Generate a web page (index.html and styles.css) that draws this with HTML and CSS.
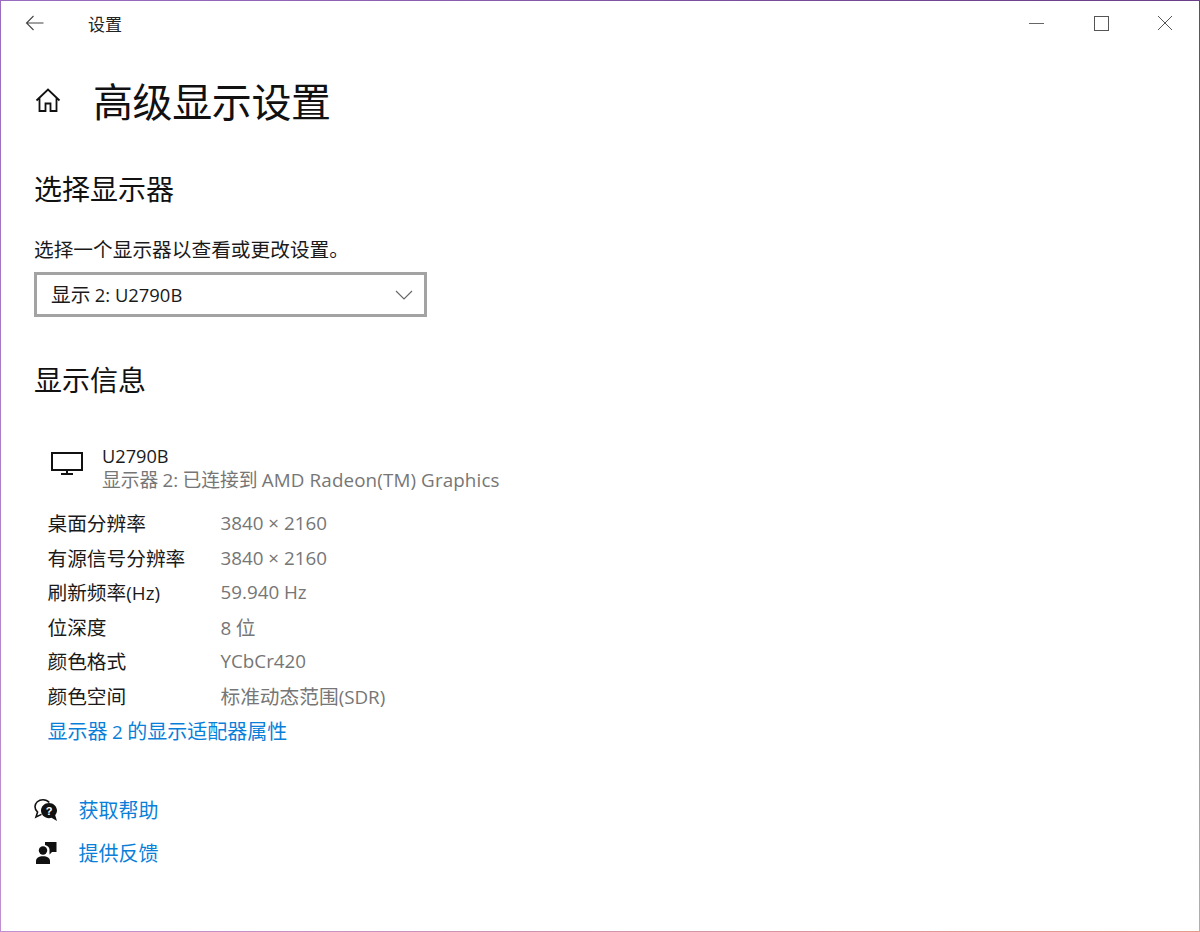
FILE: index.html
```html
<!DOCTYPE html>
<html lang="zh-CN">
<head>
<meta charset="utf-8">
<title>设置</title>
<link rel="stylesheet" href="styles.css">
</head>
<body>
<div class="window">
  <header class="titlebar">
    <svg class="back" width="20" height="16" viewBox="0 0 20 16"><path d="M8.500 1 1.500 8l7 7M1.500 8h17" fill="none" stroke="#444" stroke-width="1.100"/></svg>
    <span class="title">设置</span>
    <div class="controls">
      <svg width="16" height="16" viewBox="0 0 16 16"><path d="M0 8.500h15" stroke="#666" stroke-width="1"/></svg>
      <svg width="16" height="16" viewBox="0 0 16 16"><rect x="1.500" y="1.500" width="14" height="14" fill="none" stroke="#555" stroke-width="1"/></svg>
      <svg width="16" height="16" viewBox="0 0 16 16"><path d="M1 1l14 14M15 1 1 15" stroke="#555" stroke-width="1" fill="none"/></svg>
    </div>
  </header>
  <main class="content">
    <div class="page-head">
      <svg class="home" width="26" height="26" viewBox="0 0 26 26"><path d="M1.500 13.500 13 2.500l11.500 11M4.500 11v13h6v-7.500h5V24h6V11" fill="none" stroke="#111" stroke-width="1.800"/></svg>
      <h1>高级显示设置</h1>
    </div>
    <h2 class="h-select">选择显示器</h2>
    <p class="hint">选择一个显示器以查看或更改设置。</p>
    <div class="select">
      <span class="select-text">显示 <span class="lat">2: U2790B</span></span>
      <svg width="18" height="10" viewBox="0 0 18 10"><path d="M1 1l8 8 8-8" fill="none" stroke="#666" stroke-width="1.100"/></svg>
    </div>
    <h2 class="h-info">显示信息</h2>
    <div class="monitor">
      <svg class="monitor-icon" width="32" height="23" viewBox="0 0 32 23"><path d="M1 1h30v17H1zM16 18v4M10 22h12" fill="none" stroke="#111" stroke-width="2"/></svg>
      <div class="monitor-text">
        <div class="m-name lat">U2790B</div>
        <div class="m-desc">显示器 <span class="lat">2:</span> 已连接到 <span class="lat wide">AMD Radeon(TM) Graphics</span></div>
      </div>
    </div>
    <dl class="info">
      <dt>桌面分辨率</dt><dd class="lat">3840 × 2160</dd>
      <dt>有源信号分辨率</dt><dd class="lat">3840 × 2160</dd>
      <dt>刷新频率<span class="lat">(Hz)</span></dt><dd class="lat">59.940 Hz</dd>
      <dt>位深度</dt><dd><span class="lat">8</span> 位</dd>
      <dt>颜色格式</dt><dd class="lat">YCbCr420</dd>
      <dt>颜色空间</dt><dd>标准动态范围<span class="lat">(SDR)</span></dd>
    </dl>
    <a class="link adapter">显示器 <span class="lat">2</span> 的显示适配器属性</a>
    <div class="help">
      <div class="help-row">
        <svg width="24" height="24" viewBox="0 0 24 24"><path d="M9 1.700C4.500 1.700 1 4.800 1 8.800c0 2.100 1 4 2.600 5.300L2 19l5.500-2.600" fill="none" stroke="#111" stroke-width="1.600"/><path d="M9 1.700c2.500 0 4.800 1 6.300 2.800" fill="none" stroke="#111" stroke-width="1.600"/><path d="M15 5c-4.400 0-8 3.400-8 7.600s3.600 7.600 8 7.600c.9 0 1.700-.1 2.500-.4L23 23l-1.800-5.800c1.100-1.300 1.800-2.900 1.800-4.600C23 8.400 19.400 5 15 5z" fill="#111"/><text x="15" y="17" class="q">?</text></svg>
        <a class="link">获取帮助</a>
      </div>
      <div class="help-row">
        <svg width="24" height="24" viewBox="0 0 24 24"><circle cx="9" cy="9.500" r="4.200" fill="#111"/><path d="M2 23v-3c0-3 2.800-4.800 7-4.800s7 1.800 7 4.800v3z" fill="#111"/><path d="M11 1h11.500v10H18l-2.500 2.500V8.500c0-2-1.800-4-4.500-4.500z" fill="#111"/></svg>
        <a class="link">提供反馈</a>
      </div>
    </div>
  </main>
</div>
</body>
</html>
```
FILE: styles.css
```css
* { box-sizing: border-box; }
html, body { margin: 0; padding: 0; height: 100%; }
body {
  font-family: "Noto Sans CJK SC", "Noto Sans", sans-serif;
  background: #fff;
  color: #1a1a1a;
}
.lat { font-family: "Open Sans", "Noto Sans CJK SC", sans-serif; font-size: 18.800px; }
.wide { letter-spacing: .13px; }
.window {
  width: 1200px;
  height: 932px;
  overflow: hidden;
  background: #fff;
  border: 1px solid;
  border-image: conic-gradient(from 52deg, #6b3f8a 0deg, #e59a8c 76deg, #c090d0 180deg, #9a6cc0 256deg, #6b3f8a 360deg) 1;
}
.titlebar {
  display: flex;
  align-items: center;
  height: 46px;
  padding-left: 24px;
}
.back { flex: none; margin-top: -2px; }
.title { margin-left: 43px; font-size: 17px; color: #222; margin-top: -1px; }
.controls {
  margin-left: auto;
  display: flex;
  gap: 48px;
  padding-right: 26px;
  margin-top: -2px;
}
.content { padding: 0 0 0 33px; }
.page-head { display: flex; align-items: center; height: 60px; margin-top: 23px; }
.home { margin-left: 1px; flex: none; }
h1 { margin: 0 0 0 32px; font-size: 40px; font-weight: 400; line-height: 60px; color: #111; letter-spacing: -.4px; }
h2 { margin: 0; font-size: 28px; font-weight: 400; line-height: 40px; color: #111; }
.h-select { margin-top: 38px; }
.hint { margin: 27px 0 0; font-size: 19.700px; line-height: 28px; }
.select {
  display: flex;
  align-items: center;
  justify-content: space-between;
  width: 393px;
  height: 45px;
  margin-top: 9px;
  padding: 0 11px 0 14px;
  border: 3px solid #a3a3a3;
  font-size: 19.700px;
}
.select-text { margin-bottom: 2px; }
.select-text .lat { font-size: 18.400px; }
.h-info { margin-top: 42px; }
.monitor { display: flex; align-items: flex-start; margin-top: 45px; margin-left: 17px; }
.monitor-icon { margin-top: 8px; flex: none; }
.monitor-text { margin-left: 19px; font-size: 19.700px; line-height: 24px; }
.m-name { font-size: 18.200px; }
.m-desc { color: #767676; font-size: 18.800px; line-height: 22px; }
.info {
  display: grid;
  grid-template-columns: 173px 1fr;
  grid-auto-rows: 34.600px;
  margin: 15px 0 0 13.500px;
  font-size: 19.700px;
  line-height: 34.600px;
}
dt, dd { margin: 0; }
dd { color: #767676; }
.link { color: #0a7fd9; font-size: 20px; }
.adapter { display: block; margin-left: 13.500px; line-height: 34.600px; }
.help { margin-top: 45.500px; display: flex; flex-direction: column; gap: 13px; }
.help-row { display: flex; align-items: center; height: 30px; }
.help-row svg { flex: none; }
.help-row .link { margin-left: 20.500px; }
.q { fill: #fff; font-size: 11px; font-weight: 700; text-anchor: middle; font-family: "Liberation Sans", sans-serif; }
```
